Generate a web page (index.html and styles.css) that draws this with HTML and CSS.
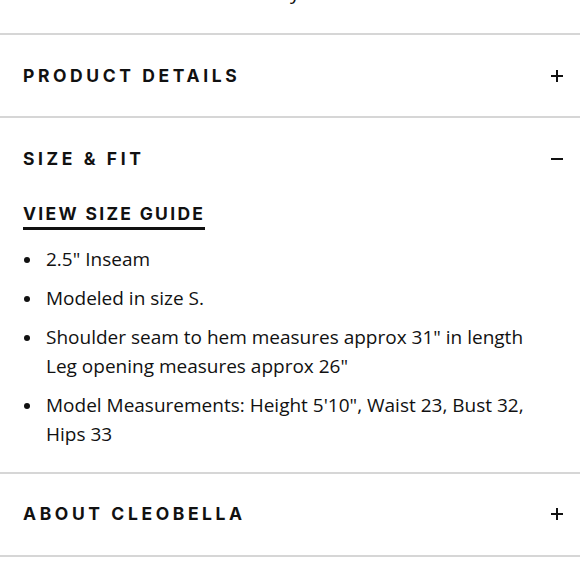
FILE: index.html
```html
<!DOCTYPE html>
<html>
<head>
<meta charset="utf-8">
<link rel="stylesheet" href="styles.css">
</head>
<body>
<div class="top"><span class="frag">y</span></div>
<section class="acc">
  <div class="acc-head"><span class="title">PRODUCT DETAILS</span><span class="icon plus"></span></div>
</section>
<section class="acc">
  <div class="acc-head"><span class="title">SIZE &amp; FIT</span><span class="icon minus"></span></div>
  <div class="acc-body">
    <a class="guide">VIEW SIZE GUIDE</a>
    <ul class="list">
      <li>2.5" Inseam</li>
      <li>Modeled in size S.</li>
      <li>Shoulder seam to hem measures approx 31" in length<br>Leg opening measures approx 26"</li>
      <li>Model Measurements: Height 5'10", Waist 23, Bust 32, Hips 33</li>
    </ul>
  </div>
</section>
<section class="acc">
  <div class="acc-head"><span class="title">ABOUT CLEOBELLA</span><span class="icon plus"></span></div>
</section>
</body>
</html>
```

FILE: styles.css
```css
* { box-sizing: border-box; }
html, body { margin: 0; padding: 0; background: #fff; }
body { color: #111; font-family: "Open Sans", sans-serif; width: 580px; overflow: hidden; }
.top { height: 33px; overflow: hidden; display: flex; justify-content: flex-start; padding-left: 290px; }
.frag { font-family: "Open Sans", sans-serif; font-size: 20px; line-height: 20px; margin-top: -18px; display: block; }
.acc { border-top: 2px solid #d6d6d6; }
.acc:last-child { border-bottom: 2px solid #d6d6d6; }
.acc-head { height: 81px; display: flex; align-items: center; justify-content: space-between; padding: 0 17px 0 23px; }
.title { font-family: "Inter", sans-serif; font-weight: 700; font-size: 17.5px; letter-spacing: 3.6px; line-height: 1; }
.icon { width: 12px; height: 12px; position: relative; display: block; }
.icon::before, .icon::after { content: ""; position: absolute; background: #111; }
.icon::before { left: 0; right: 0; top: 5px; height: 2px; }
.plus::after { top: 0; bottom: 0; left: 5px; width: 2px; }
.acc-body { padding: 0 50px 23px 23px; }
.guide { display: inline-block; font-family: "Inter", sans-serif; font-weight: 700; font-size: 17.5px; letter-spacing: 2.3px; line-height: 1; padding-top: 6px; padding-bottom: 4px; border-bottom: 3px solid #111; }
.list { list-style: none; margin: 15px 0 0 0; padding: 0; }
.list li { position: relative; padding-left: 23px; font-size: 19px; line-height: 29px; margin-bottom: 10px; }
.list li:last-child { margin-bottom: 0; }
.list li::before { content: ""; position: absolute; left: 1px; top: 12px; width: 6px; height: 6px; border-radius: 50%; background: #111; }
```
